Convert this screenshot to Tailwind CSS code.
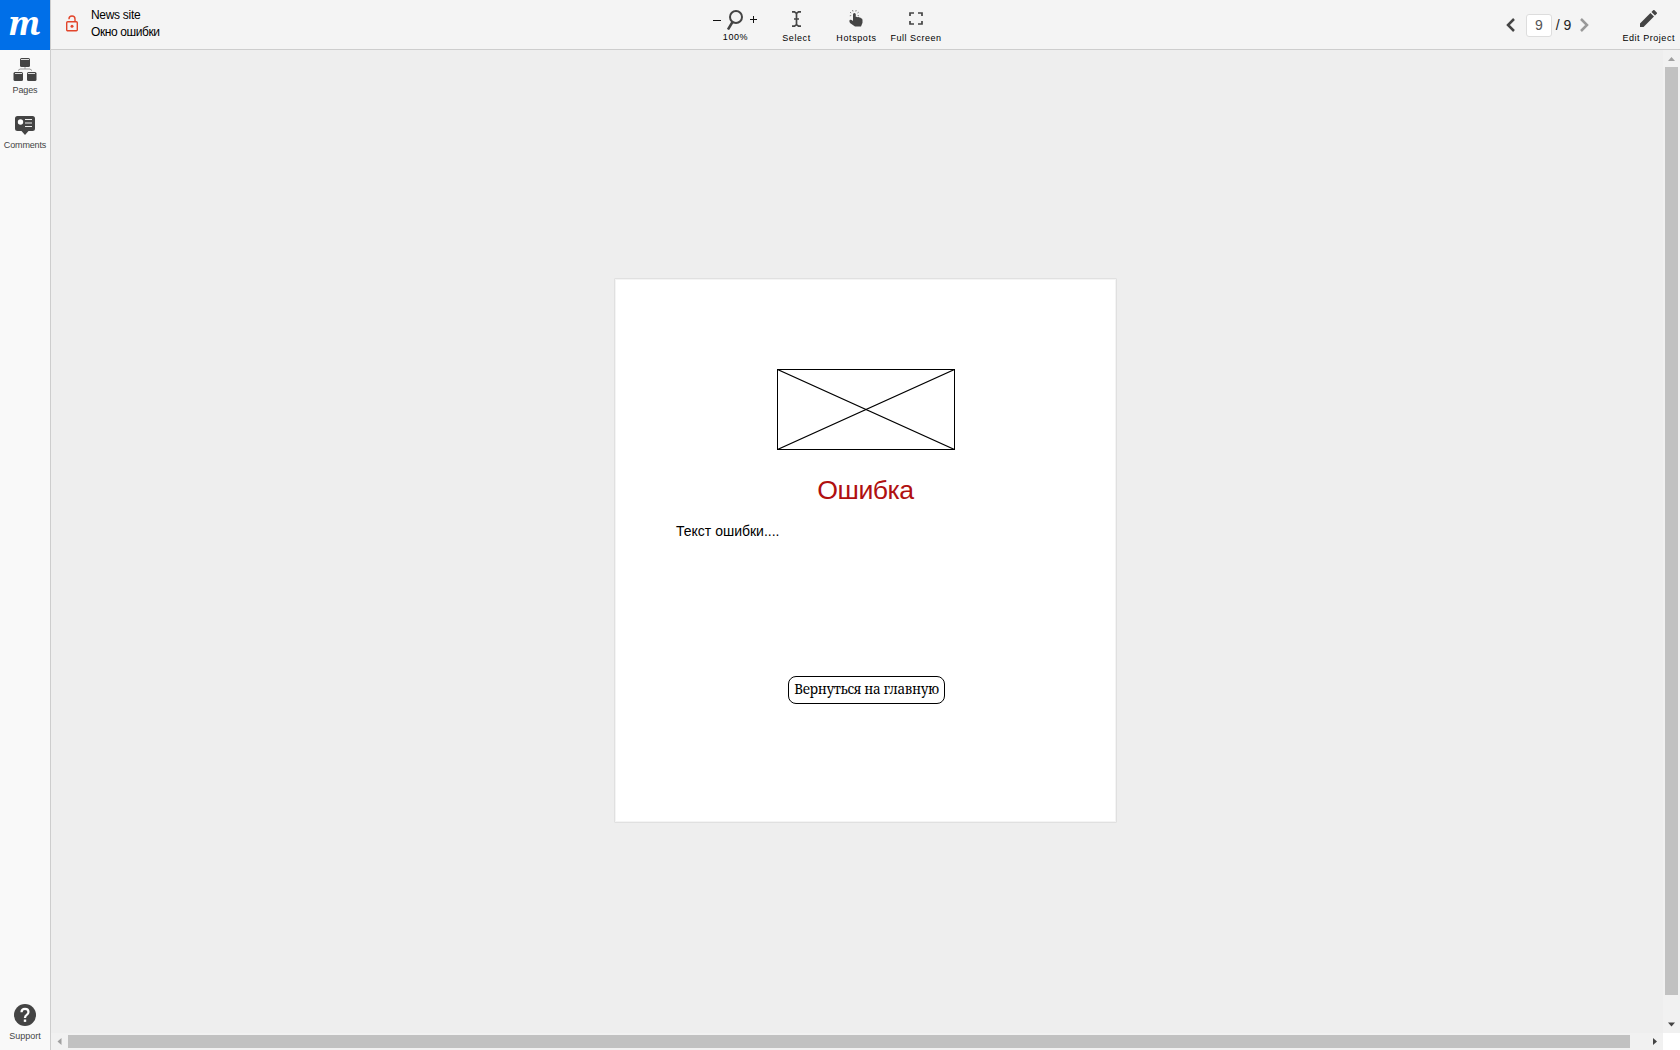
<!DOCTYPE html>
<html lang="ru">
<head>
<meta charset="utf-8">
<title>News site</title>
<script src="https://cdn.jsdelivr.net/npm/@tailwindcss/browser@4"></script>
</head>
<body class="h-[1050px] w-[1680px] overflow-hidden bg-[#eee] font-['Liberation_Sans',sans-serif] text-black flex">
<aside class="w-[51px] h-full shrink-0 border-r border-[#cdcdcd] bg-[#f9f9f9] flex flex-col items-center text-[9px] leading-[10px] tracking-[-.15px] text-[#444]">
  <div class="w-[50px] h-[50px] shrink-0 bg-[#006fe8] flex justify-center"><span class="text-white font-bold italic text-[33px] leading-[46px] tracking-normal font-['Noto_Serif','DejaVu_Serif',serif] -ml-px">m</span></div>
  <div class="mt-2 flex flex-col items-center">
    <svg class="w-6 h-[23px]" viewBox="0 0 24 23" fill="#444"><rect x="7" y="0" width="10" height="9" rx="1.5"/><rect x=".5" y="14" width="9.500" height="9" rx="1.5"/><rect x="14" y="14" width="9.500" height="9" rx="1.5"/><path d="M8 1.500h8M2 15.500h7M15 15.500h7" stroke="#ddd"/><path d="M5 12.500l2-1.500h10l2 1.500M12 9v2" fill="none" stroke="#999"/></svg>
    <span class="mt-[4px]">Pages</span>
  </div>
  <div class="mt-[21px] flex flex-col items-center">
    <svg class="w-[22px] h-[19px]" viewBox="0 0 22 19" fill="#444"><path d="M3.500 0h15q2.500 0 2.500 2.500v10q0 2.500-2.500 2.500h-4l-3.500 4-3.500-4h-4q-2.500 0-2.500-2.500v-10q0-2.500 2.500-2.500z"/><circle cx="6.500" cy="6" r="2.700" fill="#fff"/><path d="M11 3.500h7M11 7h7M11 10.500h7" stroke="#eee" stroke-width="1.200"/></svg>
    <span class="mt-[5px]">Comments</span>
  </div>
  <div class="mt-auto mb-[9px] flex flex-col items-center">
    <svg class="w-[22px] h-[22px]" viewBox="0 0 22 22"><circle cx="11" cy="11" r="11" fill="#444"/><path d="M7.500 8.300q0-3.500 3.500-3.500t3.500 3.300q0 1.700-2 3-1.500 1-1.500 2.900" fill="none" stroke="#fff" stroke-width="2.200"/><rect x="9.800" y="15.500" width="2.400" height="2.400" fill="#fff"/></svg>
    <span class="mt-[5px] tracking-normal">Support</span>
  </div>
</aside>
<div class="flex-1 flex flex-col">
  <header class="h-[50px] shrink-0 border-b border-[#cdcdcd] bg-[#f4f4f4] flex">
    <svg class="ml-[15px] mt-[15px] w-3 h-[17px] shrink-0" viewBox="0 0 12 17" fill="none" stroke="#e2452b" stroke-width="1.400"><rect x=".7" y="6.700" width="10.600" height="9" rx="1"/><path d="M3 4.300V4q0-3 3-3t3 3v2.500"/><circle cx="6" cy="11.200" r="1.500" fill="#e2452b" stroke="none"/></svg>
    <div class="ml-[13px] mt-[7px] w-[610px] text-[12px] leading-[17px] tracking-[-.3px]"><div>News site</div><div class="tracking-[-.4px]">Окно ошибки</div></div>
    <div class="flex text-[9px] leading-[10px] tracking-[.35px]">
      <div class="w-[69px] flex flex-col items-center">
        <div class="flex items-center mt-[9px] h-[22px] gap-[6px] -ml-[2px]">
          <svg class="w-2 h-2" viewBox="0 0 8 8"><path d="M0 4.500h8" stroke="#111"/></svg>
          <svg class="w-4 h-5" viewBox="0 0 16 20" fill="none" stroke="#444" stroke-width="2"><circle cx="9" cy="7" r="6"/><path d="M5.500 12L1 19.500" stroke-width="2.500"/></svg>
          <svg class="w-[7px] h-[7px] -mt-px ml-px" viewBox="0 0 7 7"><path d="M0 3.500h7M3.500 0v7" stroke="#111"/></svg>
        </div>
        <span class="mt-px tracking-[.6px]">100%</span>
      </div>
      <div class="w-[52px] flex flex-col items-center">
        <svg class="mt-[11px] w-[9px] h-4" viewBox="0 0 9 16" fill="none" stroke="#444" stroke-width="1.700"><path d="M0 .9h2.500l2 1.500 2-1.500h2.500M4.500 2v12M2 8h5M0 15.100h2.500l2-1.500 2 1.500h2.500"/></svg>
        <span class="mt-[6px] ml-px tracking-[.6px]">Select</span>
      </div>
      <div class="w-[68px] flex flex-col items-center">
        <svg class="mt-[10px] w-[14px] h-[17px]" viewBox="0 0 14 17" fill="#444"><path d="M4 4.500q0-1.500 1.400-1.500t1.400 1.500V7q1.200-.6 2 .2 1-.4 1.700.4 1-.3 1.500.6 1.500 0 1.500 1.800v2.700L12 16.500H6L1 13Q0 11.500.6 10 2 9.300 4 11z"/><path d="M.8 5.800l1.400-.3M1 2.200l1.200.8M3.500 0l.5 1.500M7.200 0l-.4 1.500M9.700 2.200l-1.200.8M10 5.800l-1.400-.3" stroke="#777" stroke-width=".9"/></svg>
        <span class="mt-[6px] ml-px tracking-[.6px]">Hotspots</span>
      </div>
      <div class="w-[52px] flex flex-col items-center">
        <svg class="mt-3 w-[14px] h-[13px]" viewBox="0 0 14 13" fill="none" stroke="#444" stroke-width="1.700"><path d="M1 4V1h4M9 1h4v3M13 9v3H9M5 12H1V9"/></svg>
        <span class="mt-2 whitespace-nowrap tracking-[.5px]">Full Screen</span>
      </div>
    </div>
    <div class="ml-auto mr-[33px] flex items-center text-[14px]">
      <svg class="w-[9px] h-[14px]" viewBox="0 0 9 14" fill="none" stroke="#444" stroke-width="2.500"><path d="M8 1L2 7l6 6"/></svg>
      <div class="ml-[11px] w-[26px] h-[23px] rounded-[3px] border border-[#ddd] bg-white text-center leading-[21px] text-[#555] mt-[2px]">9</div>
      <span class="ml-[4px] mt-[2px] text-[#222]">/ 9</span>
      <svg class="ml-[9px] w-[9px] h-[14px]" viewBox="0 0 9 14" fill="none" stroke="#999" stroke-width="2.500"><path d="M1 1l6 6-6 6"/></svg>
    </div>
    <div class="mr-[5px] flex flex-col items-center text-[9px] leading-[10px] tracking-[.55px]">
      <svg class="mt-[10px] w-[17px] h-[17px]" viewBox="3 3 18 18" fill="#444"><path d="M3 17.250V21h3.750L17.810 9.940l-3.750-3.750zM20.710 7.040a1 1 0 0 0 0-1.410l-2.340-2.340a1 1 0 0 0-1.410 0l-1.830 1.830 3.750 3.750z"/></svg>
      <span class="mt-[6px] whitespace-nowrap">Edit Project</span>
    </div>
  </header>
  <div class="flex-1 flex">
    <main class="flex-1 pl-[563px] pt-[228px]">
      <section class="w-[503px] h-[545px] border border-[#e0e0e0] bg-white rounded-[1px] shadow-[inset_0_0_0_1px_#f4f4f4] flex flex-col">
        <svg class="ml-[162px] mt-[90px] w-[178px] h-[81px] shrink-0" viewBox="0 0 178 81" fill="none" stroke="#000"><rect x=".5" y=".5" width="177" height="80"/><path d="M.5.5l177 80M177.500.5l-177 80" stroke-width="1.200"/></svg>
        <h1 class="mt-[24px] text-center text-[26.670px] leading-[32px] tracking-[-.5px] text-[#b01010]">Ошибка</h1>
        <p class="ml-[61px] mt-[16px] text-[14px] leading-[18px]">Текст ошибки....</p>
        <div class="ml-[173px] mt-[136px] w-[157px] h-[28px] rounded-[8px] border border-black flex justify-center whitespace-nowrap font-['Noto_Serif','Liberation_Serif',serif] text-[13.5px] leading-[25px] tracking-[-.35px]">Вернуться на главную</div>
      </section>
    </main>
    <div class="w-[17px] bg-[#f1f1f1] flex flex-col items-center h-[983px]">
      <svg class="w-[17px] h-[17px]" viewBox="0 0 17 17"><path d="M5 11l3.500-4 3.500 4z" fill="#a0a0a0"/></svg>
      <div class="w-[13px] h-[928px] bg-[#c1c1c1]"></div>
      <svg class="mt-auto w-[17px] h-[17px]" viewBox="0 0 17 17"><path d="M5 6.500h7l-3.500 4z" fill="#444"/></svg>
    </div>
  </div>
  <div class="h-[17px] flex bg-white shrink-0">
    <div class="w-[1612px] bg-[#f1f1f1] flex items-center">
      <svg class="w-[17px] h-[17px]" viewBox="0 0 17 17"><path d="M10.500 5v7l-4-3.500z" fill="#a0a0a0"/></svg>
      <div class="w-[1562px] h-[13px] bg-[#c1c1c1]"></div>
      <svg class="ml-auto w-[17px] h-[17px]" viewBox="0 0 17 17"><path d="M7 5v7l4-3.500z" fill="#444"/></svg>
    </div>
  </div>
</div>
</body>
</html>
